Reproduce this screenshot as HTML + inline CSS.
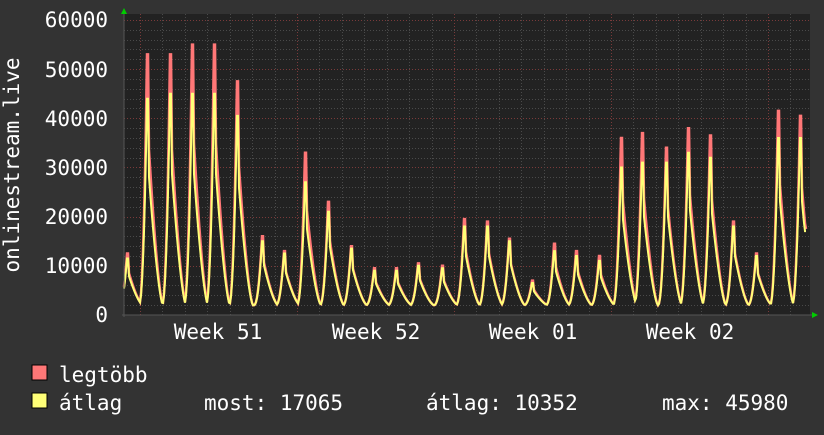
<!DOCTYPE html>
<html><head><meta charset="utf-8"><style>
body{margin:0;background:#333333;width:824px;height:430px;overflow:hidden}
svg text{font-family:"DejaVu Sans Mono","Liberation Mono",monospace;fill:#fff;font-size:21px}
</style></head><body>
<svg id="g" width="824" height="430" xmlns="http://www.w3.org/2000/svg">
<rect width="824" height="430" fill="#333"/>
<rect x="124" y="14" width="686" height="301" fill="#222"/>
<g id="grid"></g>
<polyline id="mx" fill="none" stroke="#ff7777" stroke-width="2.5" points=""/>
<polyline id="av" fill="none" stroke="#ffff77" stroke-width="2" points=""/>
<line x1="122" y1="315" x2="814" y2="315" stroke="#555" stroke-width="1"/>
<line x1="124" y1="12" x2="124" y2="317" stroke="#555" stroke-width="1"/>
<polygon points="121,14 127,14 124,8" fill="#0c0"/>
<polygon points="812,312 812,318 818,315" fill="#0c0"/>
<g text-anchor="end">
<text x="108" y="27">60000</text>
<text x="108" y="77">50000</text>
<text x="108" y="126">40000</text>
<text x="108" y="175">30000</text>
<text x="108" y="224">20000</text>
<text x="108" y="273">10000</text>
<text x="108" y="322">0</text>
</g>
<text transform="translate(19,165) rotate(-90)" text-anchor="middle">onlinestream.live</text>
<g text-anchor="middle">
<text x="218" y="339">Week 51</text>
<text x="376" y="339">Week 52</text>
<text x="533" y="339">Week 01</text>
<text x="690" y="339">Week 02</text>
</g>
<rect x="32" y="365" width="15" height="15" fill="#ff7777" stroke="#000"/>
<rect x="32" y="393" width="15" height="15" fill="#ffff77" stroke="#000"/>
<text x="59" y="382">legtöbb</text>
<text x="59" y="410">átlag</text>
<text x="204" y="410">most: 17065</text>
<text x="426" y="410">átlag: 10352</text>
<text x="662" y="410">max: 45980</text>
</svg>
<script>
var g=document.getElementById("grid"),s="";
function Y(v){return 315-v*0.004917;}
for(var v=2000;v<=60000;v+=2000){var y=Math.round(Y(v))+.5;var maj=v%10000==0;
s+='<line x1="124" x2="810" y1="'+y+'" y2="'+y+'" stroke="'+(maj?'#7a3a3a':'#4a4a4a')+'" stroke-dasharray="1,2"/>';}
for(var x=140;x<810;x+=22.43){var xx=Math.round(x)+.5;var k=Math.round((x-140)/22.43);var maj=k%7==0;
s+='<line y1="14" y2="315" x1="'+xx+'" x2="'+xx+'" stroke="'+(maj?'#7a3a3a':'#4a4a4a')+'" stroke-dasharray="1,2"/>';}
g.innerHTML=s;
var P=[[127,12.5,11.5],[147,53,44],[170,53,45],[192,55,45],[214,55,45],[237,47.5,40.5],[262,16,15],[284,13,12.5],[305,33,27],[328,23,21],[351,14,13.5],[374,9.5,9],[396,9.5,9],[418,10.5,10],[442,10,9.5],[464,19.5,18],[487,19,18],[509,15.5,15],[532,7,6.5],[554,14.5,13],[576,13,12],[599,12,11],[621,36,30],[642,37,31],[666,34,31],[688,38,33],[710,36.5,32],[733,19,18],[756,12.5,12],[778,41.5,36],[800,40.5,36]];
function f(x,i){var best=2000;for(var j=0;j<P.length;j++){var d=x-P[j][0],h=P[j][i]*1000,v,fr;
if(d<-8||d>16)continue;
if(d<=0)fr=Math.pow((d+8)/8,2.2);
else if(d<2)fr=1;
else fr=0.62*Math.pow(Math.max(0,1-(d-2)/14),1.5);
v=2000+(h-2000)*fr;
if(v>best)best=v;}return best;}
var a="",b="";
for(var x=124;x<=806;x++){var m=f(x,1),n=f(x,2);if(x>=803){m=Math.max(m,17500);n=Math.max(n,17065);}
a+=x+","+Y(m).toFixed(1)+" ";b+=x+","+Y(n).toFixed(1)+" ";}
document.getElementById("mx").setAttribute("points",a);
document.getElementById("av").setAttribute("points",b);
</script>
</body></html>
